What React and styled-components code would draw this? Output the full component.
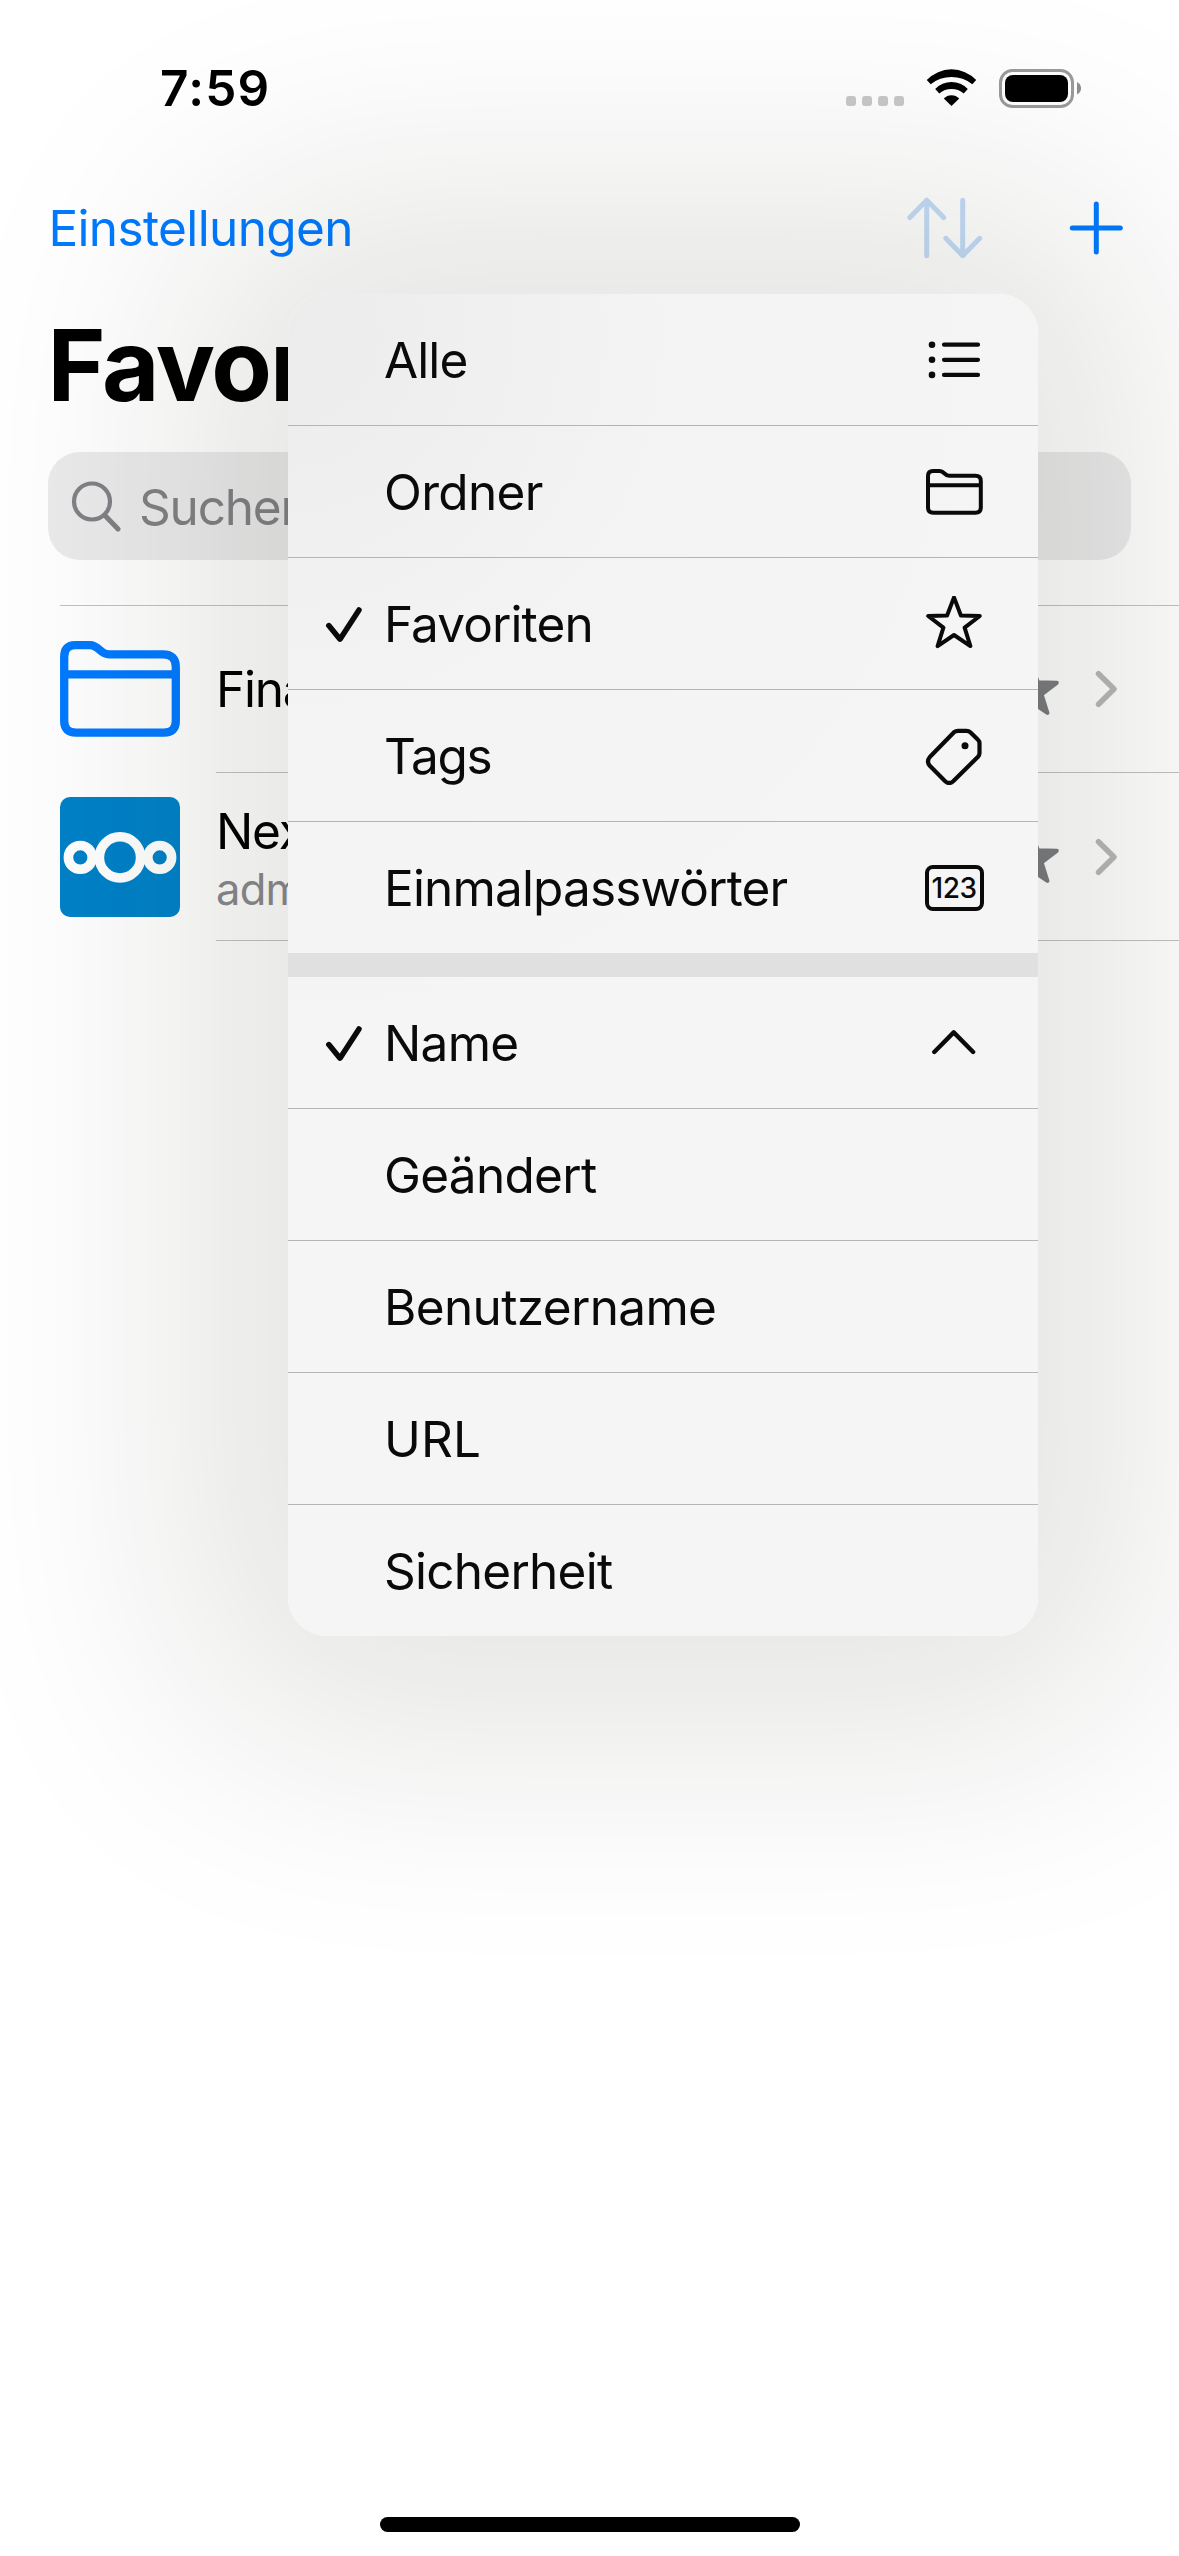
import React from 'react';
import styled, { createGlobalStyle } from 'styled-components';

const GlobalStyle = createGlobalStyle`
  * { box-sizing: border-box; }
  body {
    margin: 0;
    background: #fff;
    font-family: Inter, 'Liberation Sans', sans-serif;
  }
`;

const Screen = styled.div`
  position: relative;
  width: 1179px;
  height: 2556px;
  overflow: hidden;
  display: flex;
  flex-direction: column;
  background: #fff;
  color: #000;
  font-size: 49.5px;
  line-height: 60px;
  white-space: nowrap;
`;

const StatusBar = styled.header`
  flex: none;
  height: 176px;
  padding: 0 98px 0 160px;
  display: flex;
  align-items: center;
  justify-content: space-between;
`;

const Clock = styled.time`
  font-weight: 600;
  letter-spacing: 1.28px;
`;

const StatusIcons = styled.div`
  display: flex;
  align-items: center;
`;

const SignalDots = styled.div`
  display: flex;
  gap: 6px;
  margin: 26px 22px 0 0;
`;

const SignalDot = styled.span`
  width: 10px;
  height: 10px;
  border-radius: 3px;
  background: #c9c9c9;
`;

const WifiGlyph = styled.svg`
  margin-right: 22px;
`;

const NavBar = styled.nav`
  flex: none;
  height: 104px;
  padding: 0 54px 0 48.4px;
  display: flex;
  align-items: center;
  justify-content: space-between;
`;

const NavButton = styled.button`
  border: 0;
  padding: 0;
  background: none;
  display: flex;
  font: inherit;
  letter-spacing: -0.63px;
  color: #007aff;
`;

const NavActions = styled.div`
  display: flex;
  align-items: center;
  gap: 86px;
`;

const Title = styled.h1`
  flex: none;
  margin: 35px 0;
  height: 100px;
  padding-left: 47.6px;
  font-size: 99px;
  line-height: 100px;
  font-weight: 700;
  letter-spacing: -2.04px;
`;

const SearchField = styled.div`
  flex: none;
  height: 108px;
  margin: 2px 48px 0;
  padding: 2px 0 0 23px;
  display: flex;
  align-items: center;
  gap: 18px;
  border-radius: 32px;
  background: #ebebec;
  color: #828286;
  letter-spacing: -1.2px;
`;

const List = styled.ul`
  flex: none;
  list-style: none;
  margin: 45px 0 0;
  padding: 0;

  &::before {
    content: '';
    display: block;
    height: 1px;
    margin: 0 0 -1px 60px;
    background: #c2c2c4;
  }
`;

const ListRow = styled.li`
  height: 168px;
  padding-left: 60px;
  display: flex;
  align-items: center;
  gap: 36px;
`;

const RowBody = styled.div`
  flex: 1;
  height: 168px;
  padding-right: 61px;
  display: flex;
  align-items: center;
  border-bottom: 1px solid #c2c2c4;
`;

const RowText = styled.div`
  flex: 1;
  display: flex;
  flex-direction: column;
  padding-top: ${(p) => (p.$stacked ? 6 : 1)}px;
`;

const RowTitle = styled.span`
  letter-spacing: -1.2px;
`;

const RowSubtitle = styled.span`
  margin-top: -2px;
  font-size: 43.5px;
  letter-spacing: -0.8px;
  color: #8a8a8e;
`;

const RowStar = styled.svg`
  margin-right: 35.5px;
`;

const HomeIndicator = styled.div`
  width: 420px;
  height: 15px;
  margin: auto auto 24px;
  border-radius: 8px;
  background: #000;
`;

const Menu = styled.div`
  position: absolute;
  left: 288px;
  top: 294px;
  width: 750px;
  border-radius: 39px;
  overflow: hidden;
  color: #0a0a0a;
  background: radial-gradient(circle at 0 40px, #ececec 0, #efefef 150px, #f3f3f3 360px, #f5f5f5 700px);
`;

const MenuShadow = styled.div`
  position: absolute;
  left: 288px;
  top: 294px;
  width: 750px;
  height: 1342px;
  border-radius: 39px;
  box-shadow: 0 0 250px 98px rgba(24, 24, 4, 0.116);
`;

const MenuItem = styled.div`
  height: ${(p) => (p.$last ? 131 : 132)}px;
  border-bottom: ${(p) => (p.$last ? 0 : 1)}px solid #b5b5b6;
  display: grid;
  grid-template-columns: 96px 1fr 168px;
  align-items: center;
`;

const MenuLabel = styled.span`
  letter-spacing: ${(p) => p.$tracking}px;
`;

const IconCell = styled.span`
  display: flex;
  justify-content: center;
`;

const CheckCell = styled.span`
  display: flex;
  padding-left: 37px;
`;

const MenuGap = styled.div`
  height: 24px;
  background: #e0e0e0;
`;

const NumberBadge = styled.span`
  width: 59px;
  height: 46px;
  display: flex;
  align-items: center;
  justify-content: center;
  border: 4px solid #0a0a0a;
  border-radius: 8px;
  font-size: 28px;
  line-height: 38px;
  font-weight: 500;
  letter-spacing: -0.5px;
`;

const stroke = { fill: 'none', strokeLinecap: 'round', strokeLinejoin: 'round' };

const Wifi = () => (
  <WifiGlyph width="51" height="38" viewBox="-0.5 0 51 38">
    <path d="M0.3 11A34 34 0 0 1 49.7 11L45.8 15.3A33 33 0 0 0 4.2 15.3Z" />
    <path d="M8.7 20A22.5 22.5 0 0 1 41.3 20L37.2 24.5A19 19 0 0 0 12.8 24.5Z" />
    <path d="M17.3 29.6A10.5 10.5 0 0 1 32.7 29.6L25 37Z" />
  </WifiGlyph>
);

const Battery = () => (
  <svg width="82" height="39" viewBox="0 0 82 39">
    <rect x="1.5" y="1.5" width="72" height="36" rx="12" fill="none" stroke="#9b9b9b" strokeWidth="3" />
    <rect x="6" y="6" width="63" height="27" rx="8" />
    <path d="M78 13Q82 15 82 19.2T78 25.5Z" fill="#8f8f8f" />
  </svg>
);

const SortIcon = () => (
  <svg width="76" height="62" viewBox="0 0 76 62" {...stroke} stroke="#c4dcf8" strokeWidth="5">
    <path d="M19.7 58.7V3.2M2.8 20.5L19.7 3.2L36.7 20.5" />
    <path d="M55.7 3.2V58.7M38.8 41.3L55.7 58.7L72.7 41.3" />
  </svg>
);

const PlusIcon = () => (
  <svg width="56" height="56" viewBox="0 0 56 56" {...stroke} stroke="#007aff" strokeWidth="5">
    <path d="M27.3 4V52M3.3 28H51.3" />
  </svg>
);

const SearchIcon = () => (
  <svg width="50" height="52" viewBox="0 0 50 52" {...stroke} stroke="#828286" strokeWidth="4.2">
    <circle cx="21" cy="20.5" r="18" />
    <path d="M34 34.5L47 48" strokeWidth="5" />
  </svg>
);

const BlueFolder = () => (
  <svg width="120" height="96" viewBox="0 0 120 96" {...stroke} stroke="#007aff" strokeWidth="8.3">
    <path d="M4.2 16Q4.2 4.2 15 4.2H30C39 4.2 40 13.4 49 13.4H103Q115.8 13.4 115.8 26V80Q115.8 91.6 104 91.6H16Q4.2 91.6 4.2 80ZM4.2 33.4H115.8" />
  </svg>
);

const CloudLogo = () => (
  <svg width="120" height="120" viewBox="0 0 120 120">
    <rect width="120" height="120" rx="10" fill="#0082c9" />
    <g fill="none" stroke="#fff" strokeWidth="9.6">
      <circle cx="60" cy="60.4" r="20.6" />
      <circle cx="20.3" cy="60.4" r="11.9" />
      <circle cx="99.7" cy="60.4" r="11.9" />
    </g>
  </svg>
);

const starPath =
  'M28 2.2L34.9 20.3L53.8 20.8L38.6 32.4L44.4 50.9L28 39.8L11.6 50.9L17.4 32.4L2.2 20.8L21.1 20.3Z';

const FilledStar = () => (
  <RowStar width="56" height="54" viewBox="0 0 56 54" fill="#7c7d81" stroke="#7c7d81" strokeWidth="4" strokeLinejoin="round">
    <path d={starPath} />
  </RowStar>
);

const ChevronRight = () => (
  <svg width="24" height="38" viewBox="0 0 24 38" {...stroke} stroke="#b8b8b8" strokeWidth="5.5">
    <path d="M4.5 3.7L20 19L4.5 34.3" />
  </svg>
);

const Check = () => (
  <svg width="40" height="40" viewBox="0 0 40 40" {...stroke} stroke="#0a0a0a" strokeWidth="5.5">
    <path d="M3.8 21.6L15 35.2L34 6" />
  </svg>
);

const ListIcon = () => (
  <svg width="58" height="40" viewBox="0 0 58 40" {...stroke} stroke="#0a0a0a" strokeWidth="4.2">
    <path d="M19 4.7H53M19 19.8H53M19 34.9H53" />
    <g fill="#0a0a0a" stroke="none">
      <circle cx="7" cy="4.7" r="3.3" />
      <circle cx="7" cy="19.8" r="3.3" />
      <circle cx="7" cy="34.9" r="3.3" />
    </g>
  </svg>
);

const FolderIcon = () => (
  <svg width="57" height="48" viewBox="0 -1 57 48" {...stroke} stroke="#0a0a0a" strokeWidth="4">
    <path d="M2 7Q2 2 7 2H13.5C18.5 2 18.5 6.8 23 6.8H49.5Q54.8 6.8 54.8 12V38.5Q54.8 43.8 49.5 43.8H7.3Q2 43.8 2 38.5ZM2 16.3H54.8" />
  </svg>
);

const StarIcon = () => (
  <svg width="56" height="56" viewBox="0 0.8 56 56" {...stroke} stroke="#0a0a0a" strokeWidth="4">
    <path d={starPath} />
  </svg>
);

const TagIcon = () => (
  <svg width="58" height="58" viewBox="0 -1 58 58" {...stroke} stroke="#0a0a0a" strokeWidth="4.2">
    <path d="M29 4.2Q30.8 2.8 33 2.8H41.5Q43.8 2.8 45.3 4.2L53 11.8Q54.5 13.2 54.5 15.5V25Q54.5 27.2 53 28.8L28.2 53.2Q24.2 56.8 20.2 53.2L4.8 37.8Q1.2 33.5 4.8 29Z" />
    <circle cx="40" cy="17.8" r="3.5" fill="#0a0a0a" stroke="none" />
  </svg>
);

const ChevronUp = () => (
  <svg width="46" height="26" viewBox="0 0.8 46 26" {...stroke} stroke="#0a0a0a" strokeWidth="4.4">
    <path d="M3.3 22.8L22.7 3.2L42.1 22.8" />
  </svg>
);

const filters = [
  { label: 'Alle', tracking: -0.9, icon: <ListIcon /> },
  { label: 'Ordner', tracking: -0.65, icon: <FolderIcon /> },
  { label: 'Favoriten', tracking: -0.9, icon: <StarIcon />, checked: true },
  { label: 'Tags', tracking: -1.3, icon: <TagIcon /> },
  { label: 'Einmalpasswörter', tracking: -0.85, icon: <NumberBadge>123</NumberBadge> },
];

const sortings = [
  { label: 'Name', tracking: -0.7, icon: <ChevronUp />, checked: true },
  { label: 'Geändert', tracking: -0.7 },
  { label: 'Benutzername', tracking: -0.65 },
  { label: 'URL', tracking: 0.1 },
  { label: 'Sicherheit', tracking: -0.75 },
];

const MenuSection = ({ items }) =>
  items.map((item, i) => (
    <MenuItem key={item.label} $last={i === items.length - 1}>
      <CheckCell>{item.checked && <Check />}</CheckCell>
      <MenuLabel $tracking={item.tracking}>{item.label}</MenuLabel>
      <IconCell>{item.icon}</IconCell>
    </MenuItem>
  ));

const Entry = ({ icon, title, subtitle }) => (
  <ListRow>
    {icon}
    <RowBody>
      <RowText $stacked={Boolean(subtitle)}>
        <RowTitle>{title}</RowTitle>
        {subtitle && <RowSubtitle>{subtitle}</RowSubtitle>}
      </RowText>
      <FilledStar />
      <ChevronRight />
    </RowBody>
  </ListRow>
);

export default function App() {
  return (
    <Screen>
      <GlobalStyle />
      <StatusBar>
        <Clock>7:59</Clock>
        <StatusIcons>
          <SignalDots>
            <SignalDot />
            <SignalDot />
            <SignalDot />
            <SignalDot />
          </SignalDots>
          <Wifi />
          <Battery />
        </StatusIcons>
      </StatusBar>
      <NavBar>
        <NavButton>Einstellungen</NavButton>
        <NavActions>
          <NavButton aria-label="Sortieren"><SortIcon /></NavButton>
          <NavButton aria-label="Hinzufügen"><PlusIcon /></NavButton>
        </NavActions>
      </NavBar>
      <Title>Favoriten</Title>
      <SearchField>
        <SearchIcon />
        <span>Suchen</span>
      </SearchField>
      <List>
        <Entry icon={<BlueFolder />} title="Finanzen" />
        <Entry icon={<CloudLogo />} title="Nextcloud" subtitle="admin" />
      </List>
      <HomeIndicator />
      <MenuShadow />
      <Menu>
        <MenuSection items={filters} />
        <MenuGap />
        <MenuSection items={sortings} />
      </Menu>
    </Screen>
  );
}
